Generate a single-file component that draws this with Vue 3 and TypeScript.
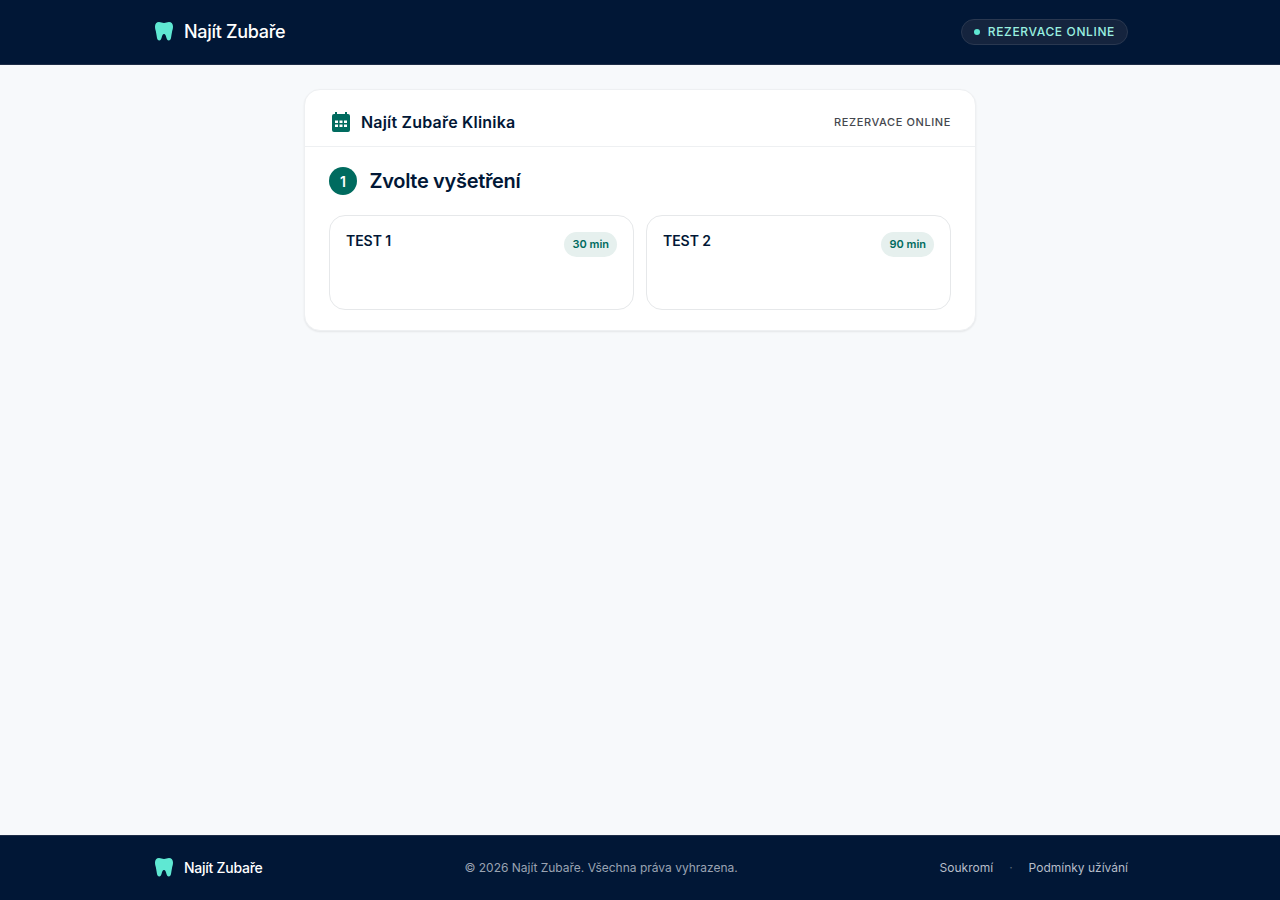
<script setup lang="ts">
const services = [
  { name: 'TEST 1', duration: '30 min' },
  { name: 'TEST 2', duration: '90 min' }
]
const toothPath =
  'M7 2C4.500 2 3 3.800 3 6.500c0 2 .5 3.500.9 5 .5 2 .6 4.500 1.100 6.500.3 1.300 1 2.500 2.200 2.500 1.300 0 2-1.200 2.400-2.800.4-1.700 1-3.700 2.400-3.700s2 2 2.400 3.700c.4 1.600 1.100 2.800 2.400 2.800 1.200 0 1.900-1.200 2.200-2.500.5-2 .6-4.500 1.100-6.500.4-1.500.9-3 .9-5C21 3.800 19.500 2 17 2c-2 0-3 .9-5 .9S9 2 7 2z'
</script>

<template>
  <div class="page">
    <header class="topbar">
      <div class="wrap topbar-inner">
        <div class="brand">
          <svg class="tooth" viewBox="0 0 24 24" width="24" height="24"><path :d="toothPath" /></svg>
          <span class="brand-name">Najít Zubaře</span>
        </div>
        <div class="online-pill">
          <span class="dot"></span>
          <span class="pill-text">REZERVACE ONLINE</span>
        </div>
      </div>
    </header>

    <main class="main">
      <section class="card">
        <div class="card-head">
          <div class="clinic">
            <svg class="cal" viewBox="0 0 24 24" width="24" height="24">
              <path
                fill-rule="evenodd"
                d="M6 2h2v2h8V2h2v2h1a2 2 0 0 1 2 2v14a2 2 0 0 1-2 2H5a2 2 0 0 1-2-2V6a2 2 0 0 1 2-2h1V2zM6 10.500h3V13H6v-2.500zm4.500 0h3V13h-3v-2.500zm4.500 0h3V13h-3v-2.500zM6 14.500h3V17H6v-2.500zm4.500 0h3V17h-3v-2.500zm4.500 0h3V17h-3v-2.500z"
              />
            </svg>
            <span class="clinic-name">Najít Zubaře Klinika</span>
          </div>
          <span class="head-label">REZERVACE ONLINE</span>
        </div>

        <div class="card-body">
          <div class="step">
            <span class="step-num">1</span>
            <h2 class="step-title">Zvolte vyšetření</h2>
          </div>
          <div class="options">
            <div v-for="s in services" :key="s.name" class="option">
              <span class="option-name">{{ s.name }}</span>
              <span class="badge">{{ s.duration }}</span>
            </div>
          </div>
        </div>
      </section>
    </main>

    <footer class="footer">
      <div class="wrap footer-inner">
        <div class="brand">
          <svg class="tooth" viewBox="0 0 24 24" width="24" height="24"><path :d="toothPath" /></svg>
          <span class="footer-name">Najít Zubaře</span>
        </div>
        <span class="copy">© 2026 Najít Zubaře. Všechna práva vyhrazena.</span>
        <nav class="links">
          <span>Soukromí</span>
          <span class="sep">·</span>
          <span>Podmínky užívání</span>
        </nav>
      </div>
    </footer>
  </div>
</template>

<style>
body {
  background: #f7f9fb;
}
</style>

<style scoped>
.page {
  min-height: 100vh;
  display: flex;
  flex-direction: column;
  background: #f7f9fb;
  font-family: Inter, "Liberation Sans", sans-serif;
}
.wrap {
  width: 100%;
  max-width: 1024px;
  margin: 0 auto;
  padding: 0 24px;
  box-sizing: border-box;
  display: flex;
  align-items: center;
  justify-content: space-between;
}
.topbar {
  background: #011736;
  border-bottom: 1px solid #1e2d47;
}
.topbar-inner {
  height: 64px;
}
.brand {
  display: flex;
  align-items: center;
  gap: 8px;
}
.tooth {
  fill: #5fe8d3;
}
.brand-name {
  padding-bottom: 2px;
  color: #fff;
  font-size: 18px;
  font-weight: 500;
  letter-spacing: -0.3px;
}
.online-pill {
  display: flex;
  align-items: center;
  gap: 8px;
  height: 26px;
  padding: 0 12px;
  box-sizing: border-box;
  border: 1px solid #2a3850;
  border-radius: 999px;
  background: #15243e;
  color: #99f0e0;
  font-size: 12px;
  font-weight: 500;
  letter-spacing: 0.63px;
}
.pill-text {
  padding-bottom: 2px;
}
.dot {
  width: 6px;
  height: 6px;
  border-radius: 50%;
  background: #5fe8d3;
}
.main {
  flex: 1;
  padding: 24px 16px;
}
.card {
  width: 672px;
  margin: 0 auto;
  box-sizing: border-box;
  background: #fff;
  border: 1px solid #eef0f2;
  border-radius: 16px;
  box-shadow: 0 1px 2px rgba(0, 0, 0, 0.08);
}
.card-head {
  height: 57px;
  box-sizing: border-box;
  padding: 8px 24px 0;
  display: flex;
  align-items: center;
  justify-content: space-between;
  border-bottom: 1px solid #eef0f2;
}
.clinic {
  display: flex;
  align-items: center;
  gap: 8px;
}
.cal {
  fill: #006b5f;
}
.clinic-name {
  color: #011736;
  font-size: 16px;
  font-weight: 600;
  letter-spacing: 0.2px;
}
.head-label {
  color: #44474e;
  font-size: 11px;
  font-weight: 500;
  letter-spacing: 0.6px;
}
.card-body {
  padding: 20px 24px;
}
.step {
  display: flex;
  align-items: center;
  gap: 12.5px;
  margin-bottom: 20px;
}
.step-num {
  width: 28px;
  height: 28px;
  border-radius: 50%;
  background: #006b5f;
  color: #fff;
  font-size: 14px;
  font-weight: 600;
  display: flex;
  align-items: center;
  justify-content: center;
}
.step-title {
  margin: 0;
  color: #011736;
  font-size: 20px;
  font-weight: 600;
  letter-spacing: -0.32px;
}
.options {
  display: grid;
  grid-template-columns: 1fr 1fr;
  gap: 12px;
}
.option {
  height: 95px;
  box-sizing: border-box;
  padding: 16px;
  border: 1px solid #e6e8ea;
  border-radius: 16px;
  display: flex;
  align-items: flex-start;
  justify-content: space-between;
}
.option-name {
  color: #011736;
  font-size: 14px;
  font-weight: 600;
  letter-spacing: -0.05px;
  line-height: 18px;
}
.badge {
  height: 25px;
  padding: 0 8px;
  border-radius: 999px;
  background: #e6f0ee;
  color: #006b5f;
  font-size: 11px;
  font-weight: 600;
  line-height: 25px;
}
.footer {
  background: #011736;
  border-top: 1px solid #1e2d47;
}
.footer-inner {
  height: 64px;
}
.footer-name {
  padding-bottom: 2px;
  color: #fff;
  font-size: 14px;
  font-weight: 500;
  letter-spacing: -0.25px;
}
.copy {
  padding-bottom: 2px;
  color: #9aa3b2;
  font-size: 12px;
}
.links {
  display: flex;
  gap: 16px;
  padding-bottom: 2px;
  color: #b6bdc9;
  font-size: 12px;
}
.sep {
  color: #5c6779;
}
</style>
